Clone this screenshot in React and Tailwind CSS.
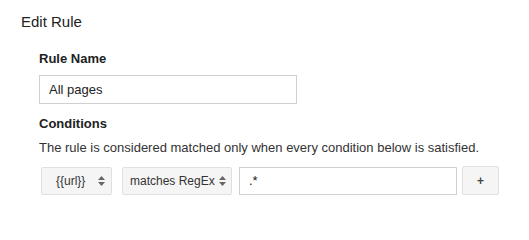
import { useState } from 'react';

const Arrows = () => (
  <svg width="7" height="10" viewBox="0 0 7 10" className="shrink-0">
    <path d="M3.5 0 L7 4 L0 4 Z" fill="#666" />
    <path d="M0 6 L7 6 L3.5 10 Z" fill="#666" />
  </svg>
);

const EditRule = () => {
  const [ruleName, setRuleName] = useState('All pages');
  const [value, setValue] = useState('.*');

  return (
    <div className="bg-white w-[529px] h-[202px] text-[#222] font-['Liberation_Sans',Arial,sans-serif]">
      <div className="pt-[13px] pl-[21px]">
        <h1 className="text-[15px] leading-[18px]">Edit Rule</h1>
      </div>

      <div className="pl-[39px] mt-[20px]">
        <h2 className="text-[13px] leading-[16px] font-bold">Rule Name</h2>
        <input
          value={ruleName}
          onChange={(e) => setRuleName(e.target.value)}
          className="mt-[8px] w-[258px] h-[29px] border border-[#d0d0d0] px-[9px] text-[13px] text-[#222] outline-none"
        />

        <h2 className="mt-[12px] text-[13px] leading-[16px] font-bold">Conditions</h2>
        <p className="mt-[8px] text-[13px] leading-[16px] text-[#333]">
          The rule is considered matched only when every condition below is satisfied.
        </p>

        <div className="mt-[10px] pl-[2px] flex items-center">
          <div className="w-[71px] h-[28px] bg-[#f5f5f5] border border-[#e0e0e0] rounded-[2px] flex items-center justify-between pl-[14px] pr-[6px] text-[12px] text-[#333]">
            <span>{'{{url}}'}</span>
            <Arrows />
          </div>
          <div className="ml-[10px] w-[110px] h-[28px] bg-[#f5f5f5] border border-[#e0e0e0] rounded-[2px] flex items-center justify-between pl-[7px] pr-[5px] text-[12px] text-[#333]">
            <span>matches RegEx</span>
            <Arrows />
          </div>
          <input
            value={value}
            onChange={(e) => setValue(e.target.value)}
            className="ml-[7px] w-[218px] h-[28px] border border-[#d0d0d0] px-[9px] text-[13px] text-[#222] outline-none"
          />
          <button className="ml-[5px] w-[37px] h-[29px] bg-[#f5f5f5] border border-[#e0e0e0] rounded-[2px] text-[12px] font-bold text-[#444]">
            +
          </button>
        </div>
      </div>
    </div>
  );
};

export default EditRule;
